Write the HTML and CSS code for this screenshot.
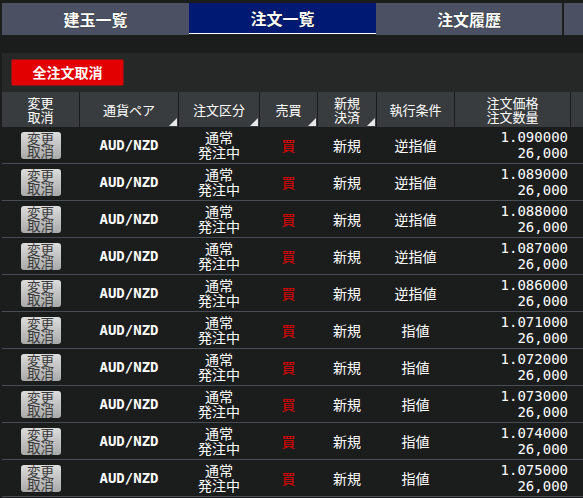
FILE: index.html
```html
<!DOCTYPE html>
<html lang="ja">
<head>
<meta charset="utf-8">
<link rel="stylesheet" href="styles.css">
</head>
<body>
<div class="page">
  <div class="tabs">
    <div class="tab">建玉一覧</div>
    <div class="tab active">注文一覧</div>
    <div class="tab t3">注文履歴</div>
    <div class="tab t4"></div>
  </div>
  <div class="panel">
    <button class="cancel-all">全注文取消</button>
  </div>
  <div class="head row-grid">
    <div class="hc two">変更<br>取消</div>
    <div class="hc sort">通貨ペア</div>
    <div class="hc sort">注文区分</div>
    <div class="hc sort">売買</div>
    <div class="hc two sort">新規<br>決済</div>
    <div class="hc">執行条件</div>
    <div class="hc two">注文価格<br>注文数量</div>
    <div class="hc"></div>
  </div>
  <div class="rows">
    <div class="row row-grid"><div class="c"><span class="btn">変更<br>取消</span></div><div class="c pair">AUD/NZD</div><div class="c two">通常<br>発注中</div><div class="c buy">買</div><div class="c">新規</div><div class="c">逆指値</div><div class="c num">1.090000<br>26,000</div><div></div></div>
    <div class="row row-grid"><div class="c"><span class="btn">変更<br>取消</span></div><div class="c pair">AUD/NZD</div><div class="c two">通常<br>発注中</div><div class="c buy">買</div><div class="c">新規</div><div class="c">逆指値</div><div class="c num">1.089000<br>26,000</div><div></div></div>
    <div class="row row-grid"><div class="c"><span class="btn">変更<br>取消</span></div><div class="c pair">AUD/NZD</div><div class="c two">通常<br>発注中</div><div class="c buy">買</div><div class="c">新規</div><div class="c">逆指値</div><div class="c num">1.088000<br>26,000</div><div></div></div>
    <div class="row row-grid"><div class="c"><span class="btn">変更<br>取消</span></div><div class="c pair">AUD/NZD</div><div class="c two">通常<br>発注中</div><div class="c buy">買</div><div class="c">新規</div><div class="c">逆指値</div><div class="c num">1.087000<br>26,000</div><div></div></div>
    <div class="row row-grid"><div class="c"><span class="btn">変更<br>取消</span></div><div class="c pair">AUD/NZD</div><div class="c two">通常<br>発注中</div><div class="c buy">買</div><div class="c">新規</div><div class="c">逆指値</div><div class="c num">1.086000<br>26,000</div><div></div></div>
    <div class="row row-grid"><div class="c"><span class="btn">変更<br>取消</span></div><div class="c pair">AUD/NZD</div><div class="c two">通常<br>発注中</div><div class="c buy">買</div><div class="c">新規</div><div class="c">指値</div><div class="c num">1.071000<br>26,000</div><div></div></div>
    <div class="row row-grid"><div class="c"><span class="btn">変更<br>取消</span></div><div class="c pair">AUD/NZD</div><div class="c two">通常<br>発注中</div><div class="c buy">買</div><div class="c">新規</div><div class="c">指値</div><div class="c num">1.072000<br>26,000</div><div></div></div>
    <div class="row row-grid"><div class="c"><span class="btn">変更<br>取消</span></div><div class="c pair">AUD/NZD</div><div class="c two">通常<br>発注中</div><div class="c buy">買</div><div class="c">新規</div><div class="c">指値</div><div class="c num">1.073000<br>26,000</div><div></div></div>
    <div class="row row-grid"><div class="c"><span class="btn">変更<br>取消</span></div><div class="c pair">AUD/NZD</div><div class="c two">通常<br>発注中</div><div class="c buy">買</div><div class="c">新規</div><div class="c">指値</div><div class="c num">1.074000<br>26,000</div><div></div></div>
    <div class="row row-grid"><div class="c"><span class="btn">変更<br>取消</span></div><div class="c pair">AUD/NZD</div><div class="c two">通常<br>発注中</div><div class="c buy">買</div><div class="c">新規</div><div class="c">指値</div><div class="c num">1.075000<br>26,000</div><div></div></div>
  </div>
</div>
</body>
</html>
```
FILE: styles.css
```css
html, body {
  margin: 0;
  padding: 0;
  background: #1b1d1d;
  height: 100%;
  overflow: hidden;
}
.page {
  padding-left: 2px;
  padding-top: 3px;
  font-family: "Noto Sans CJK JP", "DejaVu Sans", sans-serif;
  color: #fff;
}
.tabs {
  display: flex;
  height: 32px;
}
.tab {
  width: 187px;
  height: 32px;
  background: #4b5162;
  color: #fff;
  font-weight: bold;
  font-size: 16px;
  display: flex;
  align-items: center;
  justify-content: center;
  text-shadow: 0 0 1px #000;
  box-sizing: border-box;
}
.tab.active {
  background: #001a73;
  border-bottom: 1px solid #fff;
  height: 31px;
}
.tab.t3 {
  width: 186px;
}
.tab.t4 {
  margin-left: 2px;
  flex: 1;
}
.panel {
  margin-top: 18px;
  height: 39px;
  background: #262828;
  padding: 6px 0 0 9px;
  box-sizing: border-box;
}
.cancel-all {
  width: 113px;
  height: 27px;
  background: #e30000;
  border: 1px solid #7a1a1a;
  border-radius: 2px;
  color: #fff;
  font-family: "Noto Sans CJK JP", sans-serif;
  font-weight: bold;
  font-size: 14px;
  padding: 0;
  line-height: 25px;
}
.row-grid {
  display: grid;
  grid-template-columns: 77px 98px 80px 57px 58px 77px 115px 1fr;
  column-gap: 1px;
}
.head {
  height: 35px;
}
.hc {
  background: #393c3e;
  font-size: 13px;
  line-height: 14px;
  display: flex;
  align-items: center;
  justify-content: center;
  text-align: center;
  position: relative;
}
.hc.sort::after {
  content: "";
  position: absolute;
  right: 1px;
  bottom: 1px;
  width: 0;
  height: 0;
  border-left: 8px solid transparent;
  border-bottom: 8px solid #e8e8e8;
}
.row {
  height: 36px;
  border-bottom: 1px solid #474c57;
}
.c {
  display: flex;
  align-items: center;
  justify-content: center;
  text-align: center;
  font-size: 14px;
  line-height: 15px;
}
.btn {
  display: block;
  width: 40px;
  height: 27px;
  box-sizing: border-box;
  border-radius: 3px;
  background: linear-gradient(#dcdcdc, #a9a9a9);
  color: #3a3a3a;
  font-size: 13.5px;
  line-height: 13px;
  padding-top: 0.5px;
  text-align: center;
}
.pair {
  font-family: "DejaVu Sans Mono", monospace;
  font-weight: bold;
  font-size: 14px;
}
.buy {
  color: #e00000;
}
.num {
  font-family: "DejaVu Sans Mono", monospace;
  font-size: 14px;
  line-height: 16px;
  justify-content: flex-end;
  text-align: right;
  padding-right: 2px;
}
```
